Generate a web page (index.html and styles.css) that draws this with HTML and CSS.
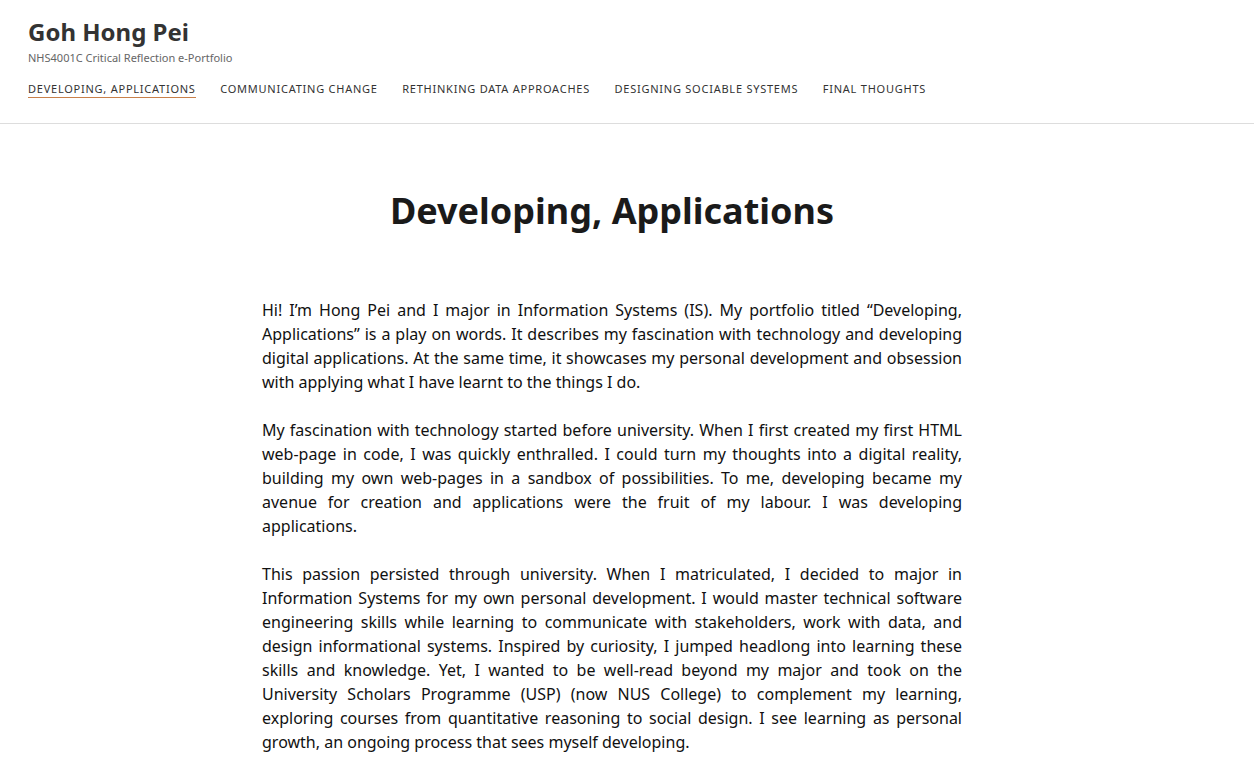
FILE: index.html
```html
<!DOCTYPE html>
<html lang="en">
<head>
<meta charset="utf-8">
<title>Goh Hong Pei</title>
<link rel="stylesheet" href="styles.css">
</head>
<body>
<header class="site-header">
  <div class="branding">
    <h1 class="site-title">Goh Hong Pei</h1>
    <p class="site-desc">NHS4001C Critical Reflection e-Portfolio</p>
  </div>
  <nav class="nav">
    <a class="nav-item active" href="#">Developing, Applications</a>
    <a class="nav-item" href="#">Communicating Change</a>
    <a class="nav-item" href="#">Rethinking Data Approaches</a>
    <a class="nav-item" href="#">Designing Sociable Systems</a>
    <a class="nav-item" href="#">Final Thoughts</a>
  </nav>
</header>
<main class="main">
  <article class="entry">
    <h2 class="entry-title">Developing, Applications</h2>
    <div class="entry-content">
      <p>Hi! I’m Hong Pei and I major in Information Systems (IS). My portfolio titled “Developing, Applications” is a play on words. It describes my fascination with technology and developing digital applications. At the same time, it showcases my personal development and obsession with applying what I have learnt to the things I do.</p>
      <p>My fascination with technology started before university. When I first created my first HTML web-page in code, I was quickly enthralled. I could turn my thoughts into a digital reality, building my own web-pages in a sandbox of possibilities. To me, developing became my avenue for creation and applications were the fruit of my labour. I was developing applications.</p>
      <p>This passion persisted through university. When I matriculated, I decided to major in Information Systems for my own personal development. I would master technical software engineering skills while learning to communicate with stakeholders, work with data, and design informational systems. Inspired by curiosity, I jumped headlong into learning these skills and knowledge. Yet, I wanted to be well-read beyond my major and took on the University Scholars Programme (USP) (now NUS College) to complement my learning, exploring courses from quantitative reasoning to social design. I see learning as personal growth, an ongoing process that sees myself developing.</p>
    </div>
  </article>
</main>
</body>
</html>
```
FILE: styles.css
```css
* { box-sizing: border-box; }
html, body { margin: 0; padding: 0; }
body {
  font-family: "Noto Sans", "Open Sans", sans-serif;
  color: #111;
  background: #fff;
}
.site-header {
  padding: 16px 28px 0;
  border-bottom: 1px solid #ddd;
}
.site-title {
  margin: 0;
  font-size: 24px;
  font-weight: 700;
  line-height: 32px;
  color: #333;
}
.site-desc {
  margin: 2px 0 0;
  font-size: 11px;
  line-height: 16px;
  color: #666;
}
.nav {
  display: flex;
  gap: 24.5px;
  padding: 15px 0 25px;
}
.nav-item {
  font-size: 11px;
  line-height: 16px;
  letter-spacing: 0.76px;
  text-transform: uppercase;
  color: #333;
  text-decoration: none;
  border-bottom: 1px solid transparent;
}
.nav-item.active {
  border-bottom-color: #c8804a;
}
.main {
  padding: 0 30px 0 0;
}
.entry {
  width: 700px;
  margin: 0 auto;
  padding-top: 63px;
}
.entry-title {
  margin: 0 0 63px;
  text-align: center;
  font-size: 36px;
  line-height: 48px;
  font-weight: 700;
  color: #1a1a1a;
}
.entry-content p {
  margin: 0 0 24px;
  font-size: 16px;
  line-height: 24px;
  text-align: justify;
  color: #111;
}
```
